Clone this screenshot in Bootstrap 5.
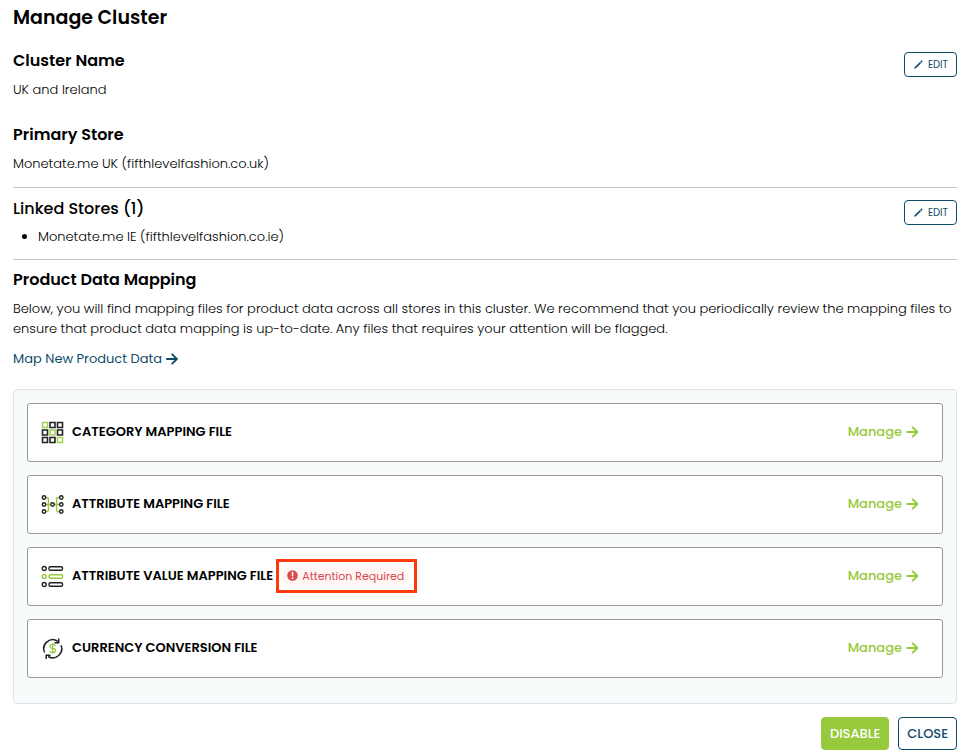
<!DOCTYPE html>
<html lang="en">
<head>
<meta charset="utf-8">
<meta name="viewport" content="width=device-width, initial-scale=1">
<title>Manage Cluster</title>
<link rel="stylesheet" href="https://cdn.jsdelivr.net/npm/bootstrap@5.3.0/dist/css/bootstrap.min.css">
<style>
  body { font-family: Poppins, Inter, sans-serif; font-size: 13px; line-height: 20px; color: #000; background: #fff; }
  .page { padding: 6px 12px 4px 13px; }
  p, li { font-weight: 300; }
  h1 { font-size: 19px; line-height: 24px; font-weight: 600; margin: 0 0 19px; }
  h2 { font-size: 16px; line-height: 24px; font-weight: 600; margin: 0 0 7px; }
  .h-medium { font-weight: 500; margin-bottom: 6px; }
  .section-line { border-bottom: 1px solid #c4c8ca; }
  .names { padding-bottom: 13px; }
  .names h2:not(:first-child) { margin-top: 23px; }
  .linked { padding: 9px 0 12px; }
  .linked ul { padding-left: 25px; }
  .mapping { padding-top: 8px; }
  .btn-outline-navy { --bs-btn-color: #0f4c6b; --bs-btn-border-color: #0f4c6b; --bs-btn-bg: #fff; --bs-btn-hover-color: #fff; --bs-btn-hover-bg: #0f4c6b; }
  .btn-edit { font-size: 10px; line-height: 13px; padding: 5px 8px; border-radius: 4px; margin-top: 3px; font-weight: 400; }
  .map-link { color: #0f4c6b; font-weight: 400; text-decoration: none; margin: 10px 0 20px; }
  .files { background: #f7fbfc; border: 1px solid #dfe3e5; border-radius: 4px; padding: 13px 13px 25px; gap: 13px; }
  .file { background: #fff; border: 1px solid #999; border-radius: 3px; min-height: 59px; padding: 0 23px 0 13px; }
  .file-name { font-size: 13px; line-height: 20px; font-weight: 600; margin: 0 0 2px 8px; }
  .manage { color: #97c93d; font-weight: 500; text-decoration: none; margin-bottom: 1px; }
  .flag { border: 3px solid #ff3b0a; padding: 4px 6px 4px 3px; margin: 0 0 2px 3px; }
  .flag-pill { background: #fff5f5; color: #d9484c; border-radius: 10px; font-size: 11px; line-height: 20px; padding: 0 4px 0 5px; }
  .actions { margin-top: 13px; gap: 9px; }
  .actions .btn { font-size: 13px; line-height: 19px; padding: 6px 8px; border-radius: 4px; font-weight: 500; }
  .btn-lime { --bs-btn-color: #fff; --bs-btn-bg: #97c93d; --bs-btn-border-color: #97c93d; --bs-btn-hover-color: #fff; --bs-btn-hover-bg: #86b631; }
</style>
</head>
<body>
<svg class="d-none" aria-hidden="true">
  <symbol id="arrow" viewBox="0 0 12 12"><path d="M.8 6h10M6.2 1.3 10.9 6l-4.7 4.7" fill="none" stroke="currentColor" stroke-width="1.8" stroke-linecap="round" stroke-linejoin="round"/></symbol>
  <symbol id="pencil" viewBox="0 0 9 9"><path d="M.4 8.600.900 7 5.900 2.200l1 1L2 8.100zM6.300 1.800 7.600.600l.900.900-1.200 1.300z" fill="currentColor" stroke="currentColor" stroke-width=".3"/></symbol>
</svg>
<main class="page">
  <h1>Manage Cluster</h1>
  <section class="names section-line d-flex justify-content-between align-items-start">
    <div>
      <h2>Cluster Name</h2>
      <p class="mb-0">UK and Ireland</p>
      <h2>Primary Store</h2>
      <p class="mb-0">Monetate.me UK (fifthlevelfashion.co.uk)</p>
    </div>
    <button type="button" class="btn btn-outline-navy btn-edit d-flex align-items-center gap-1" aria-label="Edit cluster"><svg width="11" height="9"><use href="#pencil"/></svg>EDIT</button>
  </section>
  <section class="linked section-line d-flex justify-content-between align-items-start">
    <div>
      <h2 class="h-medium">Linked Stores (1)</h2>
      <ul class="mb-0"><li>Monetate.me IE (fifthlevelfashion.co.ie)</li></ul>
    </div>
    <button type="button" class="btn btn-outline-navy btn-edit d-flex align-items-center gap-1" aria-label="Edit linked stores"><svg width="11" height="9"><use href="#pencil"/></svg>EDIT</button>
  </section>
  <section class="mapping">
    <h2>Product Data Mapping</h2>
    <p class="mb-0">Below, you will find mapping files for product data across all stores in this cluster. We recommend that you periodically review the mapping files to ensure that product data mapping is up-to-date. Any files that requires your attention will be flagged.</p>
    <div class="d-flex"><a href="#" class="map-link d-flex align-items-center gap-1">Map New Product Data <svg width="12" height="12"><use href="#arrow"/></svg></a></div>
    <div class="files d-flex flex-column">
      <article class="file d-flex align-items-center">
        <svg width="23" height="23" viewBox="0 0 23 23" fill="none" stroke="#222" stroke-width="1.600" aria-hidden="true">
          <path d="M1.500 1.500h5v5h-5zM9 9h5v5h-5zM16.500 16.500h5v5h-5z" stroke="#a5d155"/>
          <path d="M9 1.500h5v5h-5zM16.500 1.500h5v5h-5zM1.500 9h5v5h-5zM16.500 9h5v5h-5zM1.500 16.500h5v5h-5zM9 16.500h5v5h-5z"/>
        </svg>
        <h3 class="file-name">CATEGORY MAPPING FILE</h3>
        <a href="#" class="manage ms-auto d-flex align-items-center gap-1">Manage <svg width="13" height="12"><use href="#arrow"/></svg></a>
      </article>
      <article class="file d-flex align-items-center">
        <svg width="23" height="23" viewBox="0 0 23 23" fill="none" stroke="#222" stroke-width="1.400" aria-hidden="true">
          <path d="M4.500 4.500h1.300q1.600 0 1.600 1.600v11q0 1.600-1.600 1.600H4.500M4.500 11.500h5M18.500 4.500h-1.300q-1.600 0-1.600 1.600v11q0 1.600 1.600 1.600h1.300M13 11.500h5.500" stroke="#97c93d"/>
          <g fill="#fff"><circle cx="3" cy="4.500" r="1.700"/><circle cx="3" cy="11.500" r="1.700"/><circle cx="3" cy="18.500" r="1.700"/><circle cx="11.500" cy="11.500" r="1.700"/><circle cx="20.300" cy="4.500" r="1.700"/><circle cx="20.300" cy="11.500" r="1.700"/><circle cx="20.300" cy="18.500" r="1.700"/></g>
        </svg>
        <h3 class="file-name">ATTRIBUTE MAPPING FILE</h3>
        <a href="#" class="manage ms-auto d-flex align-items-center gap-1">Manage <svg width="13" height="12"><use href="#arrow"/></svg></a>
      </article>
      <article class="file d-flex align-items-center">
        <svg width="23" height="23" viewBox="0 0 23 23" fill="none" stroke="#222" stroke-width="1.400" aria-hidden="true">
          <circle cx="3.200" cy="3.500" r="2"/><rect x="8" y="1.800" width="13.500" height="3.400" rx="1.200"/>
          <g stroke="#97c93d"><circle cx="3.200" cy="11.500" r="2"/><rect x="8" y="9.800" width="13.500" height="3.400" rx="1.200"/></g>
          <circle cx="3.200" cy="19.500" r="2"/><rect x="8" y="17.800" width="13.500" height="3.400" rx="1.200"/>
        </svg>
        <h3 class="file-name">ATTRIBUTE VALUE MAPPING FILE</h3>
        <div class="flag"><div class="flag-pill d-flex align-items-center gap-1"><svg width="11" height="11" viewBox="0 0 11 11" aria-hidden="true"><circle cx="5.500" cy="5.500" r="5.300" fill="#d9484c"/><path d="M5.500 2.500v3.300" stroke="#fff" stroke-width="1.500" stroke-linecap="round"/><circle cx="5.500" cy="8.200" r=".9" fill="#fff"/></svg>Attention Required</div></div>
        <a href="#" class="manage ms-auto d-flex align-items-center gap-1">Manage <svg width="13" height="12"><use href="#arrow"/></svg></a>
      </article>
      <article class="file d-flex align-items-center">
        <svg width="23" height="23" viewBox="0 0 23 23" fill="none" stroke="#222" stroke-width="1.500" aria-hidden="true">
          <path d="M3.600 15.500A9 9 0 0 1 16.800 4.300M20 8.200A9 9 0 0 1 7.200 19.500"/>
          <path d="M17.700 1.500v4.200h-4.200M5.200 22v-3.700h4.300"/>
          <path d="M14.500 9q-.3-1.600-2.800-1.600T9 9.400q0 1.600 2.800 2t2.800 2.100q0 2-2.800 2T8.800 13.700M11.750 6v11" stroke="#97c93d" stroke-width="1.200"/>
        </svg>
        <h3 class="file-name">CURRENCY CONVERSION FILE</h3>
        <a href="#" class="manage ms-auto d-flex align-items-center gap-1">Manage <svg width="13" height="12"><use href="#arrow"/></svg></a>
      </article>
    </div>
    <div class="actions d-flex justify-content-end">
      <button type="button" class="btn btn-lime">DISABLE</button>
      <button type="button" class="btn btn-outline-navy">CLOSE</button>
    </div>
  </section>
</main>
<script src="https://cdn.jsdelivr.net/npm/bootstrap@5.3.0/dist/js/bootstrap.bundle.min.js"></script>
</body>
</html>
